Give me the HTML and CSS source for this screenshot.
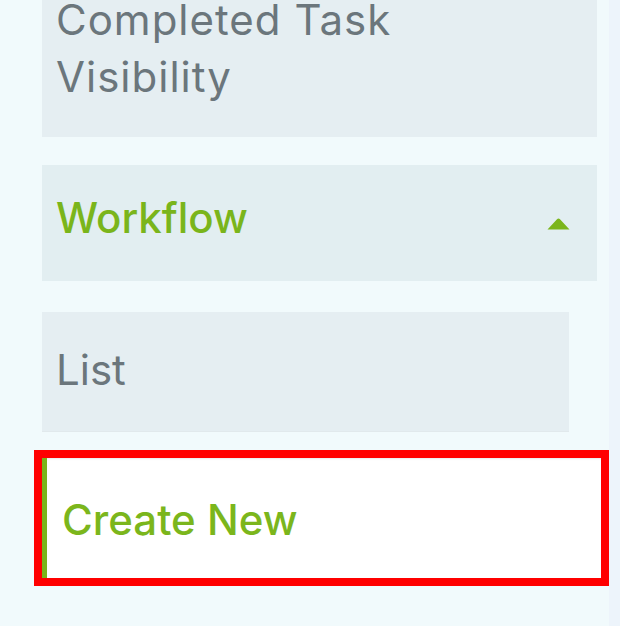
FILE: index.html
```html
<!DOCTYPE html>
<html lang="en">
<head>
<meta charset="utf-8">
<title>Sidebar</title>
<link rel="stylesheet" href="styles.css">
</head>
<body>
<div class="page">
  <nav class="sidebar">
    <div class="menu-item multi"><span class="wrap-text">Completed Task Visibility</span></div>
    <div class="menu-item group open">
      <span class="label">Workflow</span>
      <svg class="caret" width="23" height="12" viewBox="0 0 23 12" aria-hidden="true">
        <path d="M11.5 0.5 Q12.3 0.5 13 1.3 L22.5 11.5 L0.5 11.5 L10 1.3 Q10.7 0.5 11.5 0.5 Z" fill="#7bb51c"/>
      </svg>
    </div>
    <div class="submenu">
      <div class="sub-item">List</div>
      <div class="sub-item active highlighted">Create New</div>
    </div>
  </nav>
  <div class="scroll-track"></div>
</div>
</body>
</html>
```
FILE: styles.css
```css
html, body {
  margin: 0;
  padding: 0;
  height: 100%;
  overflow: hidden;
}
body {
  background: #f1fafc;
  font-family: "Inter", "Noto Sans", sans-serif;
  font-size: 42px;
  line-height: 57px;
}
.page {
  display: flex;
  height: 626px;
}
.sidebar {
  flex: 1;
  display: flex;
  flex-direction: column;
  padding-left: 42px;
  padding-right: 8px;
  margin-top: -41px;
}
.menu-item {
  background: #e5eef2;
  color: #6b767c;
  width: 555px;
  box-sizing: border-box;
  padding: 0 14px;
}
.multi {
  padding-top: 32px;
  padding-bottom: 32px;
  margin-bottom: 28px;
}
.wrap-text {
  display: block;
  max-width: 420px;
  letter-spacing: 1px;
}
.group {
  background: #e2eef1;
  display: flex;
  justify-content: space-between;
  align-items: flex-start;
  height: 116px;
  padding: 24px 27px 0 14px;
  margin-bottom: 31px;
}
.group .label {
  color: #7ab51b;
  font-weight: 500;
}
.caret {
  margin-top: 29px;
}
.submenu {
  display: flex;
  flex-direction: column;
  gap: 27px;
}
.sub-item {
  background: #e5eef2;
  color: #6b767c;
  width: 527px;
  height: 119px;
  box-sizing: border-box;
  padding: 29px 14px 0 14px;
  box-shadow: 0 1px 0 #e1e9ec;
}
.sub-item.active {
  background: #ffffff;
  color: #7bb61c;
  font-weight: 500;
  width: 559px;
  height: 120px;
  border-left: 5px solid #7ab51a;
  padding: 33px 15px 0 15px;
  box-shadow: inset 0 3px 2px -2px #e6eaec;
}
.highlighted {
  outline: 8px solid #ff0000;
  outline-offset: 0;
}
.scroll-track {
  width: 15px;
  background: #edf4fb;
}
```
